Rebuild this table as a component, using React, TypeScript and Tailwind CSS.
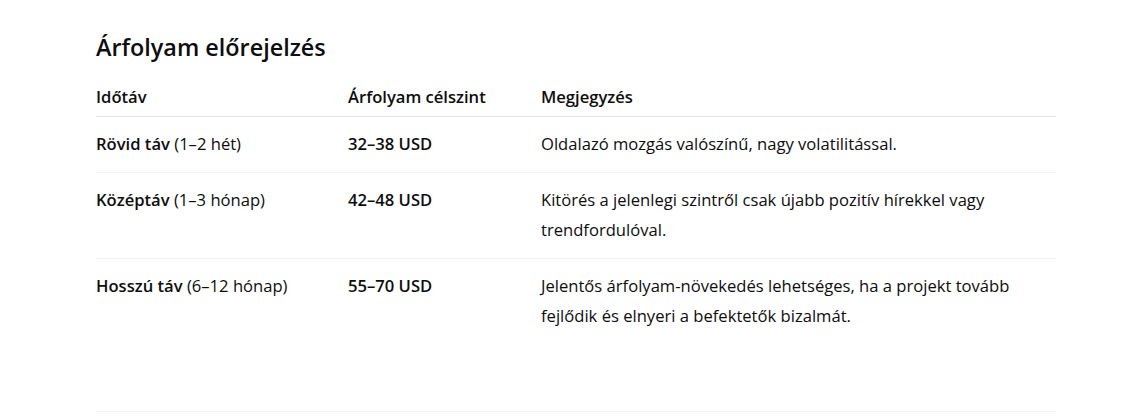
import React from "react";

interface Row {
  label: string;
  range: string;
  price: string;
  note: string;
}

const rows: Row[] = [
  {
    label: "Rövid táv",
    range: "(1–2 hét)",
    price: "32–38 USD",
    note: "Oldalazó mozgás valószínű, nagy volatilitással.",
  },
  {
    label: "Középtáv",
    range: "(1–3 hónap)",
    price: "42–48 USD",
    note: "Kitörés a jelenlegi szintről csak újabb pozitív hírekkel vagy trendfordulóval.",
  },
  {
    label: "Hosszú táv",
    range: "(6–12 hónap)",
    price: "55–70 USD",
    note: "Jelentős árfolyam-növekedés lehetséges, ha a projekt tovább fejlődik és elnyeri a befektetők bizalmát.",
  },
];

export default function App() {
  return (
    <div
      className="w-[1135px] h-[416px] bg-white text-[#0d0d0d] overflow-hidden"
      style={{ fontFamily: '"Open Sans", "Noto Sans", sans-serif' }}
    >
      <div className="ml-[96px] w-[960px] pt-[31px]">
        <h2 className="text-[23.4px] leading-[32px] font-semibold">Árfolyam előrejelzés</h2>
        <table className="w-full mt-[19px] text-[16.6px] border-collapse">
          <thead>
            <tr className="border-b border-[#e3e3e3] text-left">
              <th className="w-[252px] font-semibold leading-[30px] pb-[4px] pt-0">Időtáv</th>
              <th className="w-[193px] font-semibold leading-[30px] pb-[4px] pt-0">Árfolyam célszint</th>
              <th className="font-semibold leading-[30px] pb-[4px] pt-0">Megjegyzés</th>
            </tr>
          </thead>
          <tbody>
            {rows.map((r, i) => (
              <tr
                key={r.label}
                className={i < rows.length - 1 ? "border-b border-[#f2f2f2] align-top" : "align-top"}
              >
                <td className="pt-3 pb-[13px] leading-[30px]">
                  <span className="font-semibold">{r.label}</span> {r.range}
                </td>
                <td className="pt-3 pb-[13px] leading-[30px] font-semibold">{r.price}</td>
                <td className="pt-3 pb-[13px] leading-[30px] pr-[40px]">{r.note}</td>
              </tr>
            ))}
          </tbody>
        </table>
        <div className="mt-[67px] border-t border-[#f2f2f2]" />
      </div>
    </div>
  );
}
